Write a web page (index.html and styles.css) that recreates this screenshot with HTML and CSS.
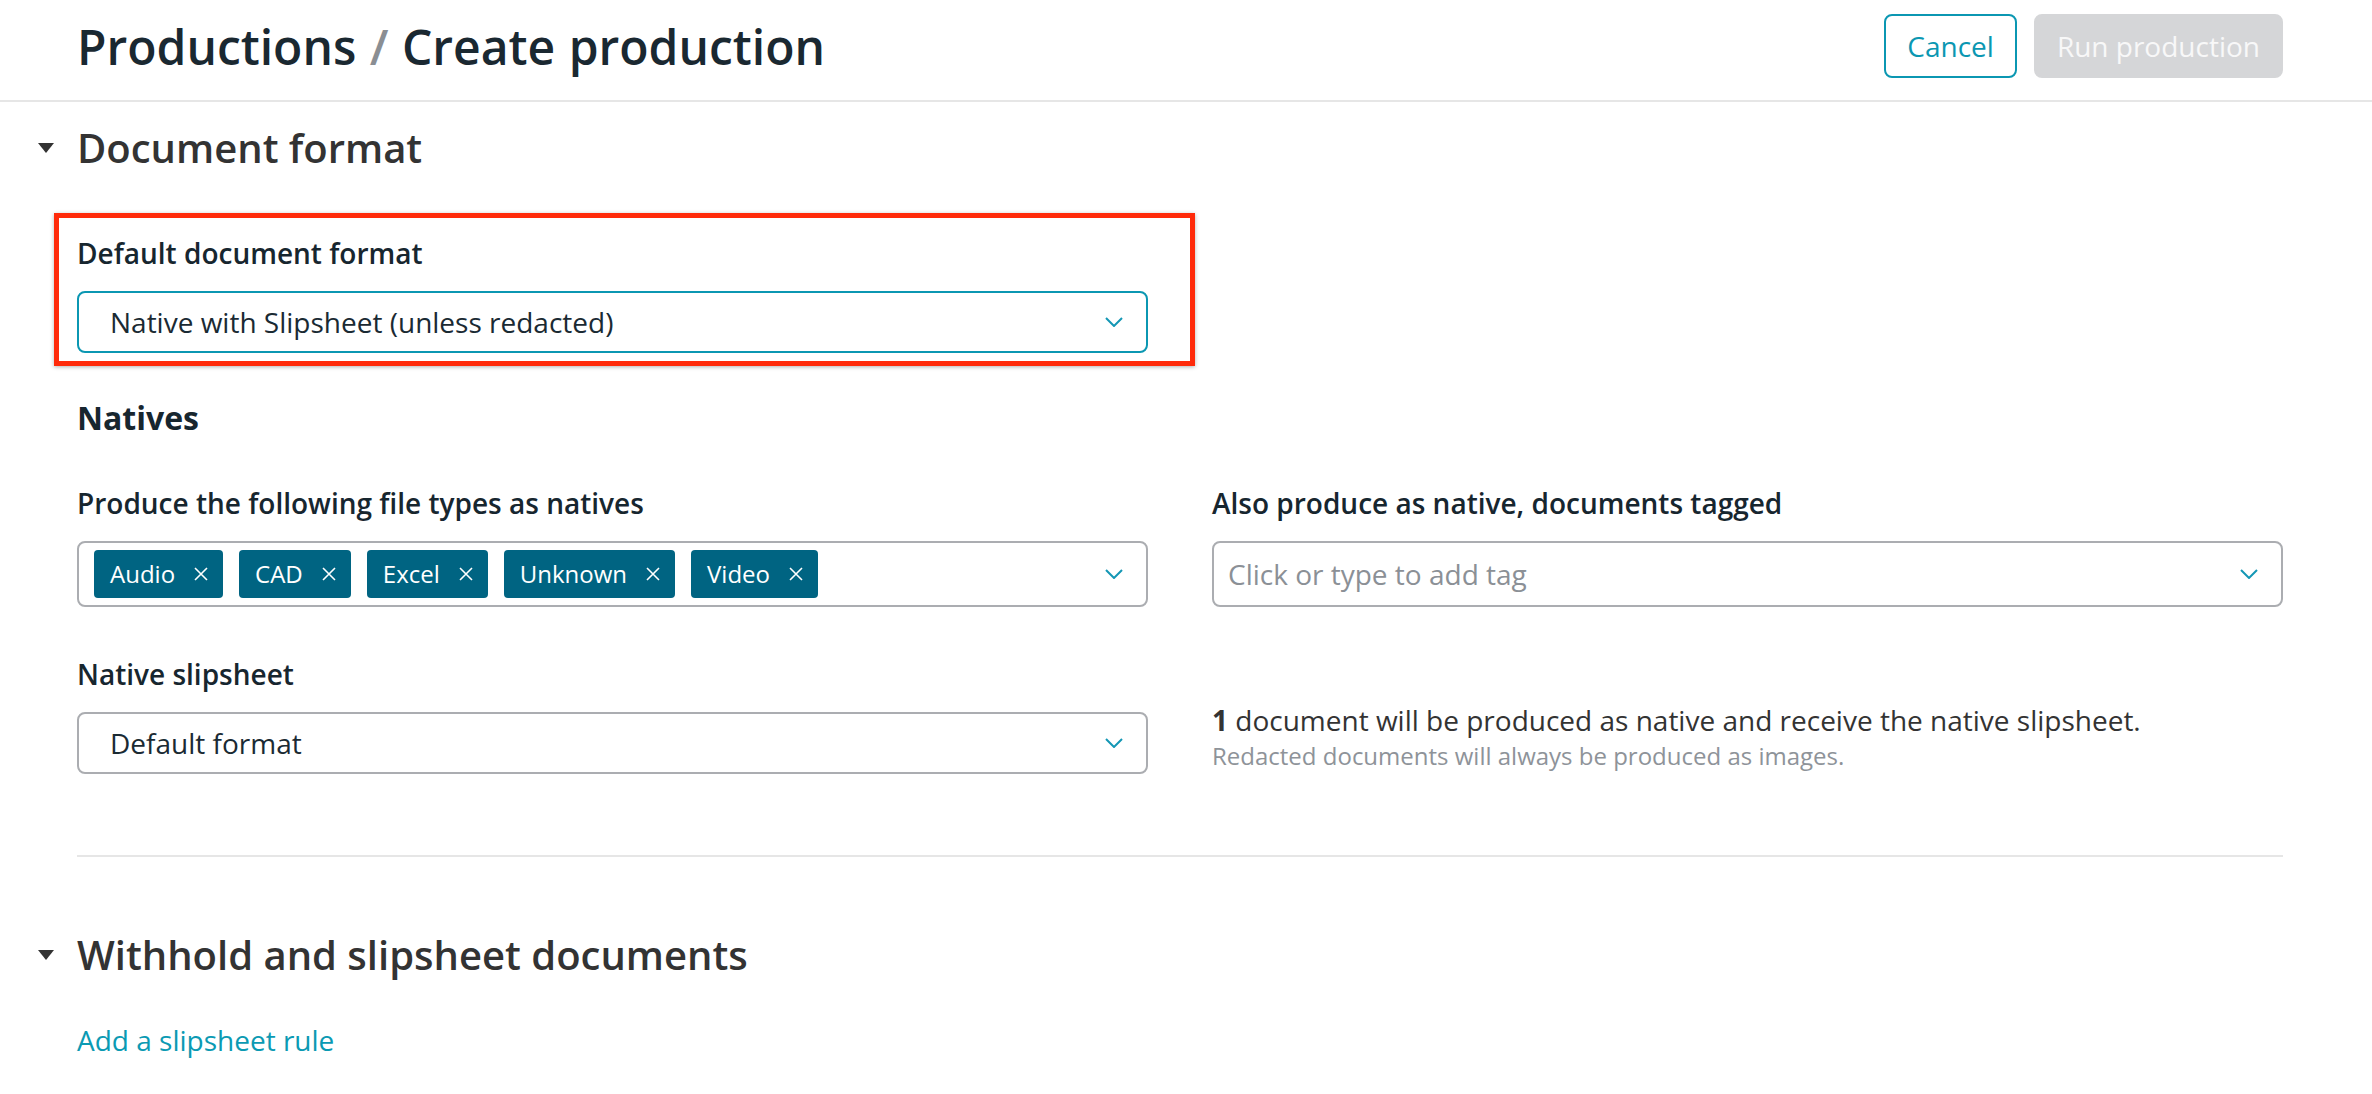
FILE: index.html
```html
<!DOCTYPE html>
<html lang="en">
<head>
  <meta charset="UTF-8">
  <title>Create production</title>
  <link rel="stylesheet" href="styles.css">
</head>
<body>
  <header class="page-header">
    <h1 class="page-title">Productions <span class="sep">/</span> Create production</h1>
    <div class="actions">
      <button class="btn btn-outline">Cancel</button>
      <button class="btn btn-disabled" disabled>Run production</button>
    </div>
  </header>

  <main class="content">
    <section class="section">
      <div class="section-head">
        <span class="caret"></span>
        <h2>Document format</h2>
      </div>

      <div class="section-body">
        <div class="field field-half highlight">
          <label class="label">Default document format</label>
          <div class="select select-focus">
            <span class="select-value">Native with Slipsheet (unless redacted)</span>
            <svg class="chevron" width="18" height="10" viewBox="0 0 18 10"><polyline points="1,1 9,9 17,1" /></svg>
          </div>
        </div>

        <h3 class="subhead">Natives</h3>

        <div class="row">
          <div class="field">
            <label class="label">Produce the following file types as natives</label>
            <div class="select tag-input">
              <div class="tags">
                <span class="tag">Audio <svg class="tag-x" width="14" height="14" viewBox="0 0 14 14"><path d="M1 1 L13 13 M13 1 L1 13" /></svg></span>
                <span class="tag">CAD <svg class="tag-x" width="14" height="14" viewBox="0 0 14 14"><path d="M1 1 L13 13 M13 1 L1 13" /></svg></span>
                <span class="tag">Excel <svg class="tag-x" width="14" height="14" viewBox="0 0 14 14"><path d="M1 1 L13 13 M13 1 L1 13" /></svg></span>
                <span class="tag">Unknown <svg class="tag-x" width="14" height="14" viewBox="0 0 14 14"><path d="M1 1 L13 13 M13 1 L1 13" /></svg></span>
                <span class="tag">Video <svg class="tag-x" width="14" height="14" viewBox="0 0 14 14"><path d="M1 1 L13 13 M13 1 L1 13" /></svg></span>
              </div>
              <svg class="chevron" width="18" height="10" viewBox="0 0 18 10"><polyline points="1,1 9,9 17,1" /></svg>
            </div>
          </div>
          <div class="field">
            <label class="label">Also produce as native, documents tagged</label>
            <div class="select tag-input">
              <span class="placeholder">Click or type to add tag</span>
              <svg class="chevron" width="18" height="10" viewBox="0 0 18 10"><polyline points="1,1 9,9 17,1" /></svg>
            </div>
          </div>
        </div>

        <div class="row row-slipsheet">
          <div class="field">
            <label class="label">Native slipsheet</label>
            <div class="select">
              <span class="select-value">Default format</span>
              <svg class="chevron" width="18" height="10" viewBox="0 0 18 10"><polyline points="1,1 9,9 17,1" /></svg>
            </div>
          </div>
          <div class="info">
            <p class="info-main"><strong>1</strong> document will be produced as native and receive the native slipsheet.</p>
            <p class="info-sub">Redacted documents will always be produced as images.</p>
          </div>
        </div>
      </div>
    </section>

    <section class="section section-withhold">
      <div class="section-head">
        <span class="caret"></span>
        <h2>Withhold and slipsheet documents</h2>
      </div>
      <a href="#" class="link">Add a slipsheet rule</a>
    </section>
  </main>
</body>
</html>
```

FILE: styles.css
```css
* {
  box-sizing: border-box;
}
body {
  margin: 0;
  font-family: "Open Sans", "Liberation Sans", sans-serif;
  background-color: #fff;
  color: #1a2a33;
}
.page-header {
  display: flex;
  justify-content: space-between;
  align-items: flex-start;
  padding: 14px 89px 21px 77px;
  border-bottom: 2px solid #e6e6e6;
}
.page-title {
  margin: 1px 0 0;
  font-size: 48px;
  line-height: 64px;
  font-weight: 600;
  color: #1a2831;
  word-spacing: 1px;
}
.page-title .sep {
  color: #8a8e93;
}
.actions {
  display: flex;
  gap: 17px;
}
.btn {
  height: 64px;
  padding: 0 21px;
  font-family: inherit;
  font-size: 28px;
  border-radius: 8px;
  border: 2px solid transparent;
}
.btn-outline {
  background-color: #fff;
  border-color: #0b97b2;
  color: #0b97b2;
}
.btn-disabled {
  background-color: #d5d6d8;
  border-color: #d5d6d8;
  color: #f8f8f8;
}
.content {
  padding: 0 89px 0 77px;
}
.section-head {
  display: flex;
  align-items: center;
  gap: 23px;
  margin: 22px 0 0 -39px;
}
.caret {
  width: 0;
  height: 0;
  border-left: 8px solid transparent;
  border-right: 8px solid transparent;
  border-top: 10px solid #333;
}
.section-head h2 {
  margin: 0;
  font-size: 40px;
  line-height: 48px;
  font-weight: 600;
  color: #333;
}
.section-body {
  padding-bottom: 81px;
  border-bottom: 2px solid #e6e6e6;
}
.field-half {
  width: calc((100% - 64px) / 2);
}
.highlight {
  position: relative;
  margin-top: 61px;
}
.highlight::before {
  content: "";
  position: absolute;
  top: -20px;
  left: -23px;
  right: -47px;
  bottom: -13px;
  border: 5px solid #ff2a0a;
  box-shadow: 0 1px 4px rgba(0, 0, 0, 0.3);
  pointer-events: none;
}
.label {
  display: block;
  font-size: 28px;
  line-height: 40px;
  font-weight: 600;
  color: #17262f;
  margin-bottom: 18px;
}
.select {
  display: flex;
  align-items: center;
  justify-content: space-between;
  height: 62px;
  padding: 0 23px 0 31px;
  border: 2px solid #abadb1;
  border-radius: 8px;
  font-size: 28px;
  line-height: 40px;
  color: #1a2a33;
}
.select-focus {
  border-color: #0b97b2;
}
.chevron {
  flex-shrink: 0;
  fill: none;
  stroke: #1497b5;
  stroke-width: 2;
}
.subhead {
  margin: 43px 0 0;
  font-size: 32px;
  line-height: 44px;
  font-weight: 700;
  color: #17262f;
}
.row {
  display: grid;
  grid-template-columns: 1fr 1fr;
  gap: 64px;
  margin-top: 43px;
}
.row-slipsheet {
  margin-top: 47px;
}
.tag-input {
  height: 66px;
  padding: 0 23px 0 14px;
}
.tags {
  display: flex;
  gap: 16px;
  padding-left: 1px;
}
.tag {
  display: inline-flex;
  align-items: center;
  gap: 19px;
  height: 48px;
  padding: 0 15px 0 16px;
  background-color: #006482;
  color: #fff;
  font-size: 24px;
  border-radius: 4px;
}
.tag-x {
  fill: none;
  stroke: #fff;
  stroke-width: 1.6;
}
.placeholder {
  color: #8b9096;
}
.info {
  align-self: end;
  margin-bottom: 2px;
}
.info p {
  margin: 0;
}
.info-main {
  font-size: 28px;
  line-height: 40px;
  color: #333;
}
.info-main strong {
  font-weight: 700;
}
.info-sub {
  font-size: 24px;
  line-height: 32px;
  color: #8e9399;
}
.section-withhold .section-head {
  margin-top: 74px;
}
.link {
  display: inline-block;
  margin-top: 41px;
  font-size: 28px;
  line-height: 40px;
  color: #0b9ab3;
  text-decoration: none;
}
```
